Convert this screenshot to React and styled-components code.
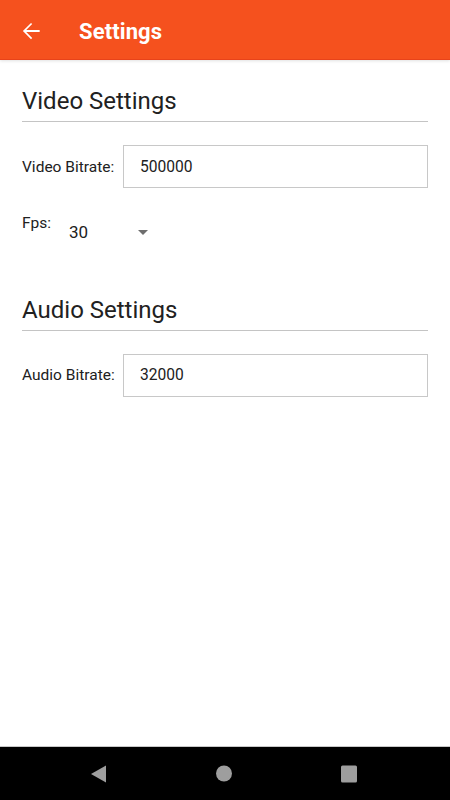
import React from "react";
import styled, { createGlobalStyle } from "styled-components";

const Global = createGlobalStyle`
  html, body { margin: 0; padding: 0; background: #fff; }
  body { font-family: Roboto, "Noto Sans", sans-serif; }
  #root { width: 450px; height: 800px; }
`;

const Screen = styled.div`
  width: 450px;
  height: 800px;
  display: flex;
  flex-direction: column;
  background: #fff;
  overflow: hidden;
`;

const AppBar = styled.header`
  height: 60px;
  flex: none;
  display: flex;
  align-items: center;
  background: #f5511e;
  border-bottom: 1px solid #e8431a;
  box-shadow: 0 1px 3px rgba(0, 0, 0, 0.12);
  box-sizing: border-box;
  padding-left: 18px;
  position: relative;
  z-index: 1;
`;

const BackButton = styled.button`
  width: 26px;
  height: 26px;
  padding: 0;
  border: 0;
  background: none;
  display: flex;
  align-items: center;
  justify-content: center;
  margin-right: 35px;
  margin-top: 2px;
`;

const Title = styled.h1`
  margin: 0;
  color: #fff;
  font-family: Roboto, sans-serif;
  font-weight: 700;
  font-size: 22px;
  letter-spacing: 0.1px;
  margin-top: 4px;
`;

const Content = styled.main`
  flex: 1;
  padding: 0 22px;
`;

const Section = styled.section`
  display: flex;
  flex-direction: column;
  margin-top: ${(p) => p.$top}px;
`;

const SectionTitle = styled.h2`
  margin: 0;
  font-family: Roboto, sans-serif;
  font-weight: 400;
  font-size: 24px;
  line-height: 28px;
  color: #212121;
  padding-bottom: 6px;
  border-bottom: 1px solid #c4c4c4;
`;

const FieldRow = styled.div`
  display: flex;
  align-items: center;
  margin-top: 23px;
`;

const Label = styled.label`
  width: 101px;
  flex: none;
  font-size: 15.5px;
  color: #212121;
`;

const Input = styled.div`
  flex: 1;
  height: 43px;
  box-sizing: border-box;
  border: 1px solid #c8c8c8;
  display: flex;
  align-items: center;
  padding-left: 16px;
  font-size: 15.6px;
  color: #212121;
`;

const SelectRow = styled.div`
  display: flex;
  align-items: flex-start;
  margin-top: 27px;
`;

const SelectLabel = styled.span`
  font-size: 15.5px;
  color: #212121;
  width: 47px;
  flex: none;
  line-height: 16px;
`;

const SelectValue = styled.div`
  display: flex;
  align-items: center;
  width: 79px;
  justify-content: space-between;
  font-size: 17px;
  line-height: 19px;
  color: #212121;
  padding-top: 7.5px;
`;

const Caret = styled.span`
  width: 0;
  height: 0;
  border-left: 5px solid transparent;
  border-right: 5px solid transparent;
  border-top: 5px solid #6e6e6e;
`;

const NavBar = styled.nav`
  height: 53px;
  flex: none;
  background: #000;
  border-top: 1px solid #c8c8c8;
  display: flex;
  align-items: center;
  justify-content: center;
  gap: 105px;
  padding-right: 2px;
`;

const NavIcon = styled.svg`
  width: 20px;
  height: 20px;
  display: block;
`;

export default function App() {
  return (
    <>
      <Global />
      <Screen>
        <AppBar>
          <BackButton aria-label="back">
            <svg width="26" height="26" viewBox="0 0 24 24">
              <path
                d="M20 11.1H7.6l5.5-5.5L12 4.5l-7.5 7.5 7.5 7.5 1.1-1.1-5.5-5.5H20v-1.8z"
                fill="#fff"
              />
            </svg>
          </BackButton>
          <Title>Settings</Title>
        </AppBar>
        <Content>
          <Section $top={27}>
            <SectionTitle>Video Settings</SectionTitle>
            <FieldRow>
              <Label>Video Bitrate:</Label>
              <Input>500000</Input>
            </FieldRow>
            <SelectRow>
              <SelectLabel>Fps:</SelectLabel>
              <SelectValue>
                30
                <Caret />
              </SelectValue>
            </SelectRow>
          </Section>
          <Section $top={54}>
            <SectionTitle>Audio Settings</SectionTitle>
            <FieldRow>
              <Label>Audio Bitrate:</Label>
              <Input>32000</Input>
            </FieldRow>
          </Section>
        </Content>
        <NavBar>
          <NavIcon viewBox="0 0 20 20">
            <path d="M17 1.5 L17 18.5 L2 10 Z" fill="#9e9e9e" />
          </NavIcon>
          <NavIcon viewBox="0 0 20 20">
            <circle cx="10" cy="9.5" r="8" fill="#9e9e9e" />
          </NavIcon>
          <NavIcon viewBox="0 0 20 20">
            <rect x="2" y="1.5" width="16" height="17" rx="1.5" fill="#9e9e9e" />
          </NavIcon>
        </NavBar>
      </Screen>
    </>
  );
}
